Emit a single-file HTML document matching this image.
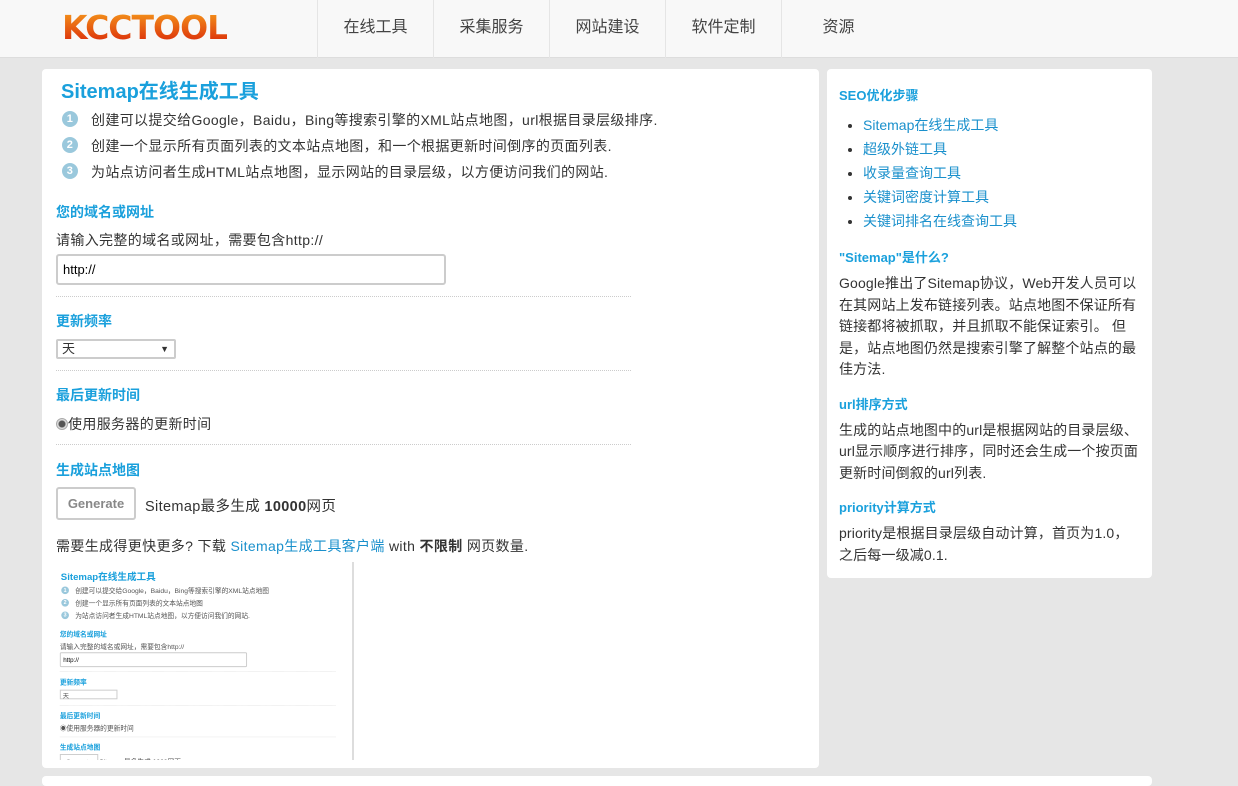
<!DOCTYPE html>
<html><head><meta charset="utf-8"><style>
*{box-sizing:border-box;margin:0;padding:0}
body{width:1238px;height:780px;overflow:hidden;background:#e6e6e6;font-family:"Liberation Sans","Noto Sans CJK SC",sans-serif;color:#333;font-size:14px}
.hdr{height:58px;background:#f8f8f8;border-bottom:1px solid #ddd;position:relative}
.logo{position:absolute;left:62px;top:8px;font:bold 33px "DejaVu Sans",sans-serif;letter-spacing:-1px;background:linear-gradient(#f7a01d,#d82008);-webkit-background-clip:text;color:transparent}
.nav{position:absolute;left:317px;top:0;display:flex}
.nav div{width:116px;height:58px;border-left:1px solid #e5e5e5;text-align:center;line-height:56px;font-size:16px;color:#444}
.main{position:absolute;left:42px;top:69px;width:777px;height:699px;background:#fff;border-radius:4px}
.side{position:absolute;left:827px;top:69px;width:325px;height:509px;background:#fff;border-radius:4px;padding:16px 12px}
.bot{position:absolute;left:42px;top:776px;width:1110px;height:10px;background:#fff;border-radius:4px}
.a{position:absolute;white-space:nowrap}
.m{letter-spacing:0.35px}
h1{color:#1aa0dc;font-size:20px;font-weight:bold}
.li i{position:absolute;left:-29px;top:1px;width:16px;height:16px;border-radius:50%;background:#9ac8dc;color:#fff;font-size:11px;font-style:normal;text-align:center;line-height:16px;font-weight:bold}
h3{color:#1aa0dc;font-size:14px;font-weight:bold}
.line{position:absolute;left:14px;width:575px;border-top:1px dotted #ccc}
input.t{width:390px;height:31px;border:2px solid #ccc;border-radius:3px;padding-left:5px;font-size:13px}
a{color:#1a90cc;text-decoration:none}
.side h3{font-size:13px}
.side ul{margin-left:24px;margin-top:9px;margin-bottom:14px}
.side li{height:24px;line-height:24px;font-size:14px}
.side p{font-size:14px;line-height:21.5px;margin-top:7px;margin-bottom:13px;letter-spacing:0.15px}
</style></head><body>
<div class="hdr"><div class="logo">KCCTOOL</div>
<div class="nav"><div>在线工具</div><div>采集服务</div><div>网站建设</div><div>软件定制</div><div style="width:114px">资源</div></div></div>
<div class="main">
<h1 class="a" style="left:19px;top:6px">Sitemap在线生成工具</h1>
<div class="a li m" style="left:49px;top:41px"><i>1</i>创建可以提交给Google，Baidu，Bing等搜索引擎的XML站点地图，url根据目录层级排序.</div>
<div class="a li m" style="left:49px;top:67px"><i>2</i>创建一个显示所有页面列表的文本站点地图，和一个根据更新时间倒序的页面列表.</div>
<div class="a li m" style="left:49px;top:93px"><i>3</i>为站点访问者生成HTML站点地图，显示网站的目录层级，以方便访问我们的网站.</div>
<h3 class="a" style="left:14px;top:133px">您的域名或网址</h3>
<div class="a m" style="left:14px;top:161px">请输入完整的域名或网址，需要包含http://</div>
<input class="t a" value="http://" style="left:14px;top:185px">
<div class="line" style="top:227px"></div>
<h3 class="a" style="left:14px;top:242px">更新频率</h3>
<div class="a" style="left:14px;top:270px;width:120px;height:20px;border:2px solid #ccc;border-radius:2px;font-size:13px;padding-left:4px;line-height:16px">天<span style="position:absolute;right:5px;font-size:9px">▼</span></div>
<div class="line" style="top:301px"></div>
<h3 class="a" style="left:14px;top:316px">最后更新时间</h3>
<div class="a m" style="left:14px;top:345px"><span style="display:inline-block;width:12px;height:12px;border-radius:50%;border:1px solid #aaa;background:radial-gradient(#555 3px,#ddd 4px);vertical-align:-1px"></span>使用服务器的更新时间</div>
<div class="line" style="top:375px"></div>
<h3 class="a" style="left:14px;top:391px">生成站点地图</h3>
<div class="a" style="left:14px;top:418px;width:80px;height:33px;border:2px solid #ccc;border-radius:3px;color:#888;font-weight:bold;font-size:13px;line-height:29px;text-align:center">Generate</div>
<div class="a m" style="left:103px;top:426px;font-size:14.5px">Sitemap最多生成 <b>10000</b>网页</div>
<div class="a m" style="left:14px;top:467px">需要生成得更快更多? 下载 <a>Sitemap生成工具客户端</a> with <b>不限制</b> 网页数量.</div>
<div style="position:absolute;left:14px;top:493px;width:298px;height:198px;border-right:2px solid #ddd;overflow:hidden">
<div style="transform:scale(0.48);transform-origin:0 0;width:620px;height:420px;position:relative;color:#555">
<h1 class="a" style="left:10px;top:14px">Sitemap在线生成工具</h1>
<div class="a li" style="left:40px;top:50px"><i>1</i>创建可以提交给Google，Baidu，Bing等搜索引擎的XML站点地图</div>
<div class="a li" style="left:40px;top:76px"><i>2</i>创建一个显示所有页面列表的文本站点地图</div>
<div class="a li" style="left:40px;top:102px"><i>3</i>为站点访问者生成HTML站点地图，以方便访问我们的网站.</div>
<h3 class="a" style="left:8px;top:140px">您的域名或网址</h3>
<div class="a" style="left:8px;top:166px">请输入完整的域名或网址，需要包含http://</div>
<input class="t a" value="http://" style="left:8px;top:188px">
<div class="line" style="top:228px;left:8px"></div>
<h3 class="a" style="left:8px;top:240px">更新频率</h3>
<div class="a" style="left:8px;top:266px;width:120px;height:20px;border:2px solid #ccc;font-size:13px;padding-left:4px">天</div>
<div class="line" style="top:298px;left:8px"></div>
<h3 class="a" style="left:8px;top:310px">最后更新时间</h3>
<div class="a" style="left:8px;top:336px">◉使用服务器的更新时间</div>
<div class="line" style="top:364px;left:8px"></div>
<h3 class="a" style="left:8px;top:376px">生成站点地图</h3>
<div class="a" style="left:8px;top:400px;width:80px;height:33px;border:2px solid #ccc;color:#888;line-height:29px;text-align:center;font-size:13px">Generate</div>
<div class="a" style="left:90px;top:406px">Sitemap最多生成 <b>1000</b>网页</div>
</div></div>
</div>
<div class="side">
<h3>SEO优化步骤</h3>
<ul><li><a>Sitemap在线生成工具</a></li><li><a>超级外链工具</a></li><li><a>收录量查询工具</a></li><li><a>关键词密度计算工具</a></li><li><a>关键词排名在线查询工具</a></li></ul>
<h3>"Sitemap"是什么?</h3>
<p>Google推出了Sitemap协议，Web开发人员可以在其网站上发布链接列表。站点地图不保证所有链接都将被抓取，并且抓取不能保证索引。 但是，站点地图仍然是搜索引擎了解整个站点的最佳方法.</p>
<h3>url排序方式</h3>
<p>生成的站点地图中的url是根据网站的目录层级、url显示顺序进行排序，同时还会生成一个按页面更新时间倒叙的url列表.</p>
<h3>priority计算方式</h3>
<p>priority是根据目录层级自动计算，首页为1.0，之后每一级减0.1.</p>
</div>
<div class="bot"></div>
</body></html>
